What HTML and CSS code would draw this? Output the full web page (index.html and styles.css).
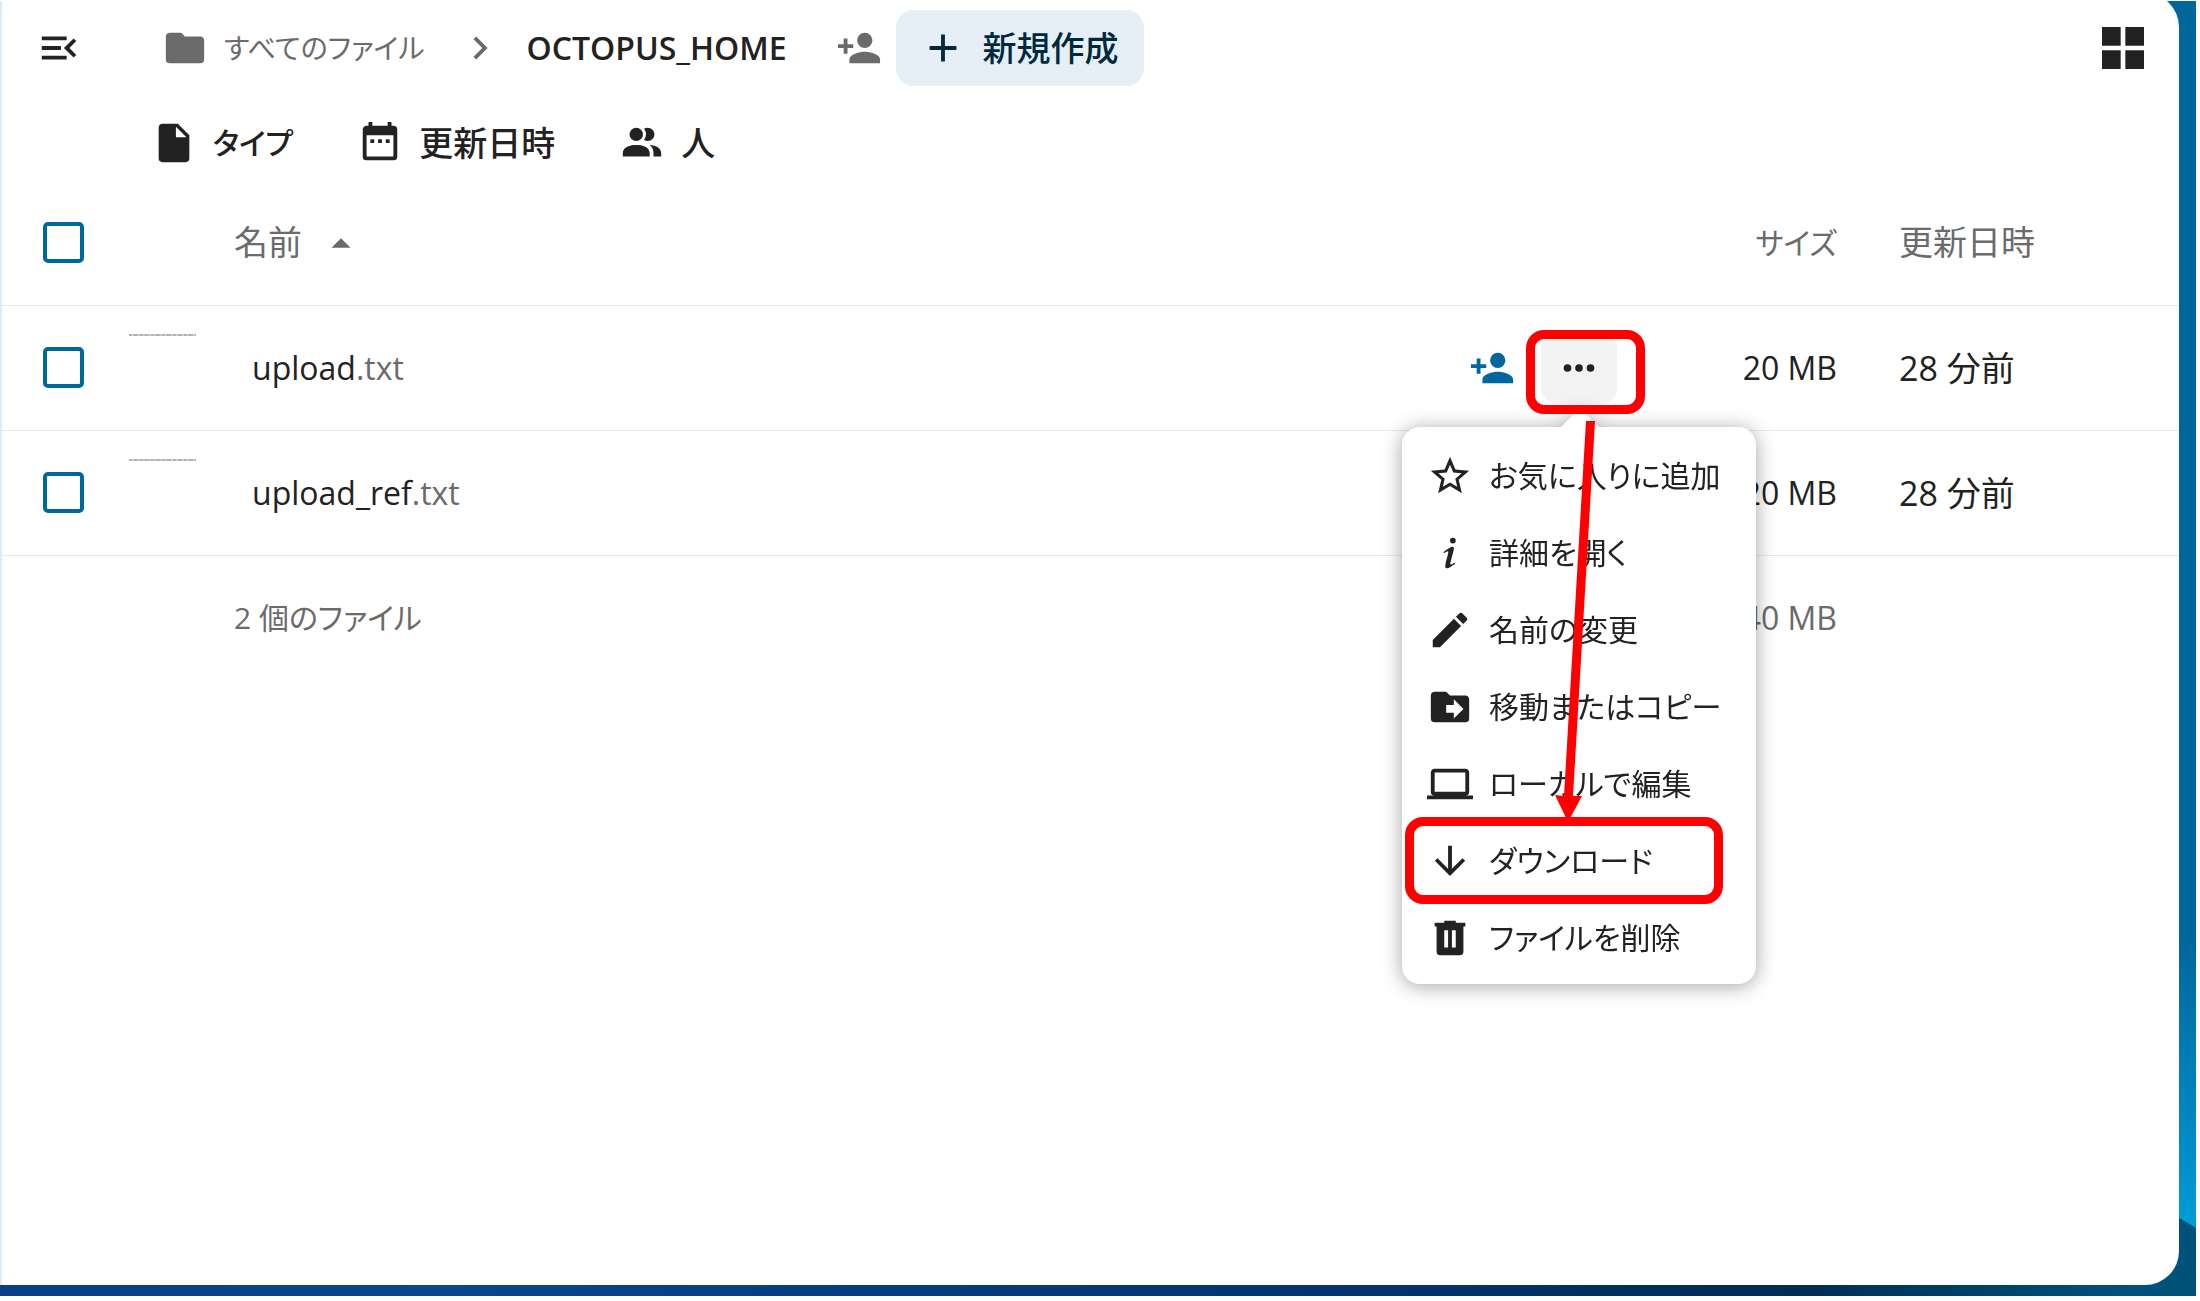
FILE: index.html
```html
<!DOCTYPE html>
<html lang="ja">
<head>
    <meta charset="UTF-8">
    <meta name="viewport" content="width=device-width, initial-scale=1.0">
    <title>OCTOPUS_HOME</title>
    <link rel="stylesheet" href="styles.css">
</head>
<body>
    <div class="frame">
      <main class="panel">
        <!-- Header -->
        <header class="topbar">
          <button class="icon-button menu-toggle" type="button" aria-label="メニュー">
            <svg class="icon" viewBox="0 0 24 24"><path d="M21,15.61L19.59,17L14.58,12L19.59,7L21,8.39L17.44,12L21,15.61M3,6H16V8H3V6M3,13V11H13V13H3M3,18V16H16V18H3Z"/></svg>
          </button>
          <nav class="breadcrumb">
            <a class="crumb" href="#">
              <svg class="icon" viewBox="0 0 24 24"><path d="M10,4H4C2.89,4 2,4.89 2,6V18A2,2 0 0,0 4,20H20A2,2 0 0,0 22,18V8C22,6.89 21.1,6 20,6H12L10,4Z"/></svg>
              <span class="crumb-title">すべてのファイル</span>
            </a>
            <svg class="icon crumb-arrow" viewBox="0 0 24 24"><path d="M8.59,16.58L13.17,12L8.59,7.41L10,6L16,12L10,18L8.59,16.58Z"/></svg>
            <a class="crumb crumb--current" href="#">OCTOPUS_HOME</a>
            <button class="icon-button crumb-share" type="button" aria-label="共有">
              <svg class="icon" viewBox="0 0 24 24"><path d="M15,14C12.33,14 7,15.33 7,18V20H23V18C23,15.33 17.67,14 15,14M6,10V7H4V10H1V12H4V15H6V12H9V10M15,12A4,4 0 0,0 19,8A4,4 0 0,0 15,4A4,4 0 0,0 11,8A4,4 0 0,0 15,12Z"/></svg>
            </button>
          </nav>
          <button class="new-button" type="button">
            <svg class="icon" viewBox="0 0 24 24"><path d="M19,13H13V19H11V13H5V11H11V5H13V11H19V13Z"/></svg>
            新規作成
          </button>
          <button class="icon-button view-toggle" type="button" aria-label="グリッド表示">
            <svg class="icon icon--large" viewBox="0 0 24 24"><path d="M3,11H11V3H3M3,21H11V13H3M13,21H21V13H13M13,11H21V3H13"/></svg>
          </button>
        </header>

        <!-- Filters -->
        <div class="filters">
          <button class="filter" type="button">
            <svg class="icon" viewBox="0 0 24 24"><path d="M13,9V3.5L18.5,9M6,2C4.89,2 4,2.89 4,4V20A2,2 0 0,0 6,22H18A2,2 0 0,0 20,20V8L14,2H6Z"/></svg>
            <span class="kana">タイプ</span>
          </button>
          <button class="filter" type="button">
            <svg class="icon" viewBox="0 0 24 24"><path d="M9,10H7V12H9V10M13,10H11V12H13V10M17,10H15V12H17V10M19,3H18V1H16V3H8V1H6V3H5C3.89,3 3,3.9 3,5V19A2,2 0 0,0 5,21H19A2,2 0 0,0 21,19V5A2,2 0 0,0 19,3M19,19H5V8H19V19Z"/></svg>
            更新日時
          </button>
          <button class="filter" type="button">
            <svg class="icon" viewBox="0 0 24 24"><path d="M16 17V19H2V17S2 13 9 13 16 17 16 17M12.5 7.5A3.5 3.5 0 1 0 9 11A3.5 3.5 0 0 0 12.5 7.5M15.94 13A5.32 5.32 0 0 1 18 17V19H22V17S22 13.37 15.94 13M15 4A3.39 3.39 0 0 0 13.07 4.59A5 5 0 0 1 13.07 10.41A3.39 3.39 0 0 0 15 11A3.5 3.5 0 0 0 15 4Z"/></svg>
            人
          </button>
        </div>

        <!-- File list -->
        <table class="files">
          <thead>
            <tr>
              <th class="col-check"><input class="check" type="checkbox" aria-label="すべて選択"></th>
              <th class="col-thumb"></th>
              <th class="col-name">
                <button class="sort" type="button">名前
                  <svg class="icon" viewBox="0 0 24 24"><path d="M7,15L12,10L17,15H7Z"/></svg>
                </button>
              </th>
              <th class="col-actions"></th>
              <th class="col-size"><span class="kana">サイズ</span></th>
              <th class="col-date">更新日時</th>
            </tr>
          </thead>
          <tbody>
            <tr>
              <td class="col-check"><input class="check" type="checkbox" aria-label="upload.txt"></td>
              <td class="col-thumb"><div class="thumb"></div></td>
              <td class="col-name"><a class="file" href="#">upload<span class="ext">.txt</span></a></td>
              <td class="col-actions">
                <div class="actions">
                  <button class="icon-button share" type="button" aria-label="共有">
                    <svg class="icon" viewBox="0 0 24 24"><path d="M15,14C12.33,14 7,15.33 7,18V20H23V18C23,15.33 17.67,14 15,14M6,10V7H4V10H1V12H4V15H6V12H9V10M15,12A4,4 0 0,0 19,8A4,4 0 0,0 15,4A4,4 0 0,0 11,8A4,4 0 0,0 15,12Z"/></svg>
                  </button>
                  <button class="icon-button more" type="button" aria-label="操作">
                    <svg class="icon" viewBox="0 0 24 24"><path d="M16,12A2,2 0 0,1 18,10A2,2 0 0,1 20,12A2,2 0 0,1 18,14A2,2 0 0,1 16,12M10,12A2,2 0 0,1 12,10A2,2 0 0,1 14,12A2,2 0 0,1 12,14A2,2 0 0,1 10,12M4,12A2,2 0 0,1 6,10A2,2 0 0,1 8,12A2,2 0 0,1 6,14A2,2 0 0,1 4,12Z"/></svg>
                  </button>

                  <!-- Popup menu -->
                  <div class="popup">
                    <ul class="menu">
                      <li><button class="menu-item" type="button">
                        <svg class="icon" viewBox="0 0 24 24"><path d="M12,15.39L8.24,17.66L9.23,13.38L5.91,10.5L10.29,10.13L12,6.09L13.71,10.13L18.09,10.5L14.77,13.38L15.76,17.66M22,9.24L14.81,8.63L12,2L9.19,8.63L2,9.24L7.45,13.97L5.82,21L12,17.27L18.18,21L16.54,13.97L22,9.24Z"/></svg>
                        お気に入りに追加
                      </button></li>
                      <li><button class="menu-item" type="button">
                        <svg class="icon" viewBox="0 0 24 24"><path d="M13.5,4A1.5,1.5 0 0,0 12,5.5A1.5,1.5 0 0,0 13.5,7A1.5,1.5 0 0,0 15,5.5A1.5,1.5 0 0,0 13.5,4M13.14,8.77C11.95,8.87 8.7,11.46 8.7,11.46C8.5,11.61 8.56,11.6 8.72,11.88C8.88,12.15 8.86,12.17 9.05,12.04C9.25,11.91 9.58,11.7 10.13,11.36C12.25,10 10.47,13.14 9.56,18.43C9.2,21.05 11.56,19.7 12.17,19.3C12.77,18.91 14.38,17.8 14.54,17.69C14.76,17.54 14.6,17.42 14.43,17.17C14.31,17 14.19,17.12 14.19,17.12C13.54,17.55 12.35,18.45 12.19,17.88C12,17.31 13.22,13.4 13.89,10.71C14,10.07 14.3,8.67 13.14,8.77Z"/></svg>
                        詳細を開く
                      </button></li>
                      <li><button class="menu-item" type="button">
                        <svg class="icon" viewBox="0 0 24 24"><path d="M20.71,7.04C21.1,6.65 21.1,6 20.71,5.63L18.37,3.29C18,2.9 17.35,2.9 16.96,3.29L15.12,5.12L18.87,8.87M3,17.25V21H6.75L17.81,9.93L14.06,6.18L3,17.25Z"/></svg>
                        名前の変更
                      </button></li>
                      <li><button class="menu-item" type="button">
                        <svg class="icon" viewBox="0 0 24 24"><path d="M14,18V15H10V11H14V8L19,13M20,6H12L10,4H4C2.89,4 2,4.89 2,6V18A2,2 0 0,0 4,20H20A2,2 0 0,0 22,18V8C22,6.89 21.1,6 20,6Z"/></svg>
                        移動またはコピー
                      </button></li>
                      <li><button class="menu-item" type="button">
                        <svg class="icon" viewBox="0 0 24 24"><path d="M4,6H20V16H4M20,18A2,2 0 0,0 22,16V6C22,4.89 21.1,4 20,4H4C2.89,4 2,4.89 2,6V16A2,2 0 0,0 4,18H0V20H24V18H20Z"/></svg>
                        ローカルで編集
                      </button></li>
                      <li><button class="menu-item" type="button">
                        <svg class="icon" viewBox="0 0 24 24"><path d="M11,4H13V16L18.5,10.5L19.92,11.92L12,19.84L4.08,11.92L5.5,10.5L11,16V4Z"/></svg>
                        ダウンロード
                      </button></li>
                      <li><button class="menu-item" type="button">
                        <svg class="icon" viewBox="0 0 24 24"><path d="M9,3V4H4V6H5V19A2,2 0 0,0 7,21H17A2,2 0 0,0 19,19V6H20V4H15V3H9M9,8H11V17H9V8M13,8H15V17H13V8Z"/></svg>
                        ファイルを削除
                      </button></li>
                    </ul>
                  </div>

                  <!-- Red guide: more button to download -->
                  <span class="mark mark--more"></span>
                  <span class="mark mark--download"></span>
                  <svg class="mark-arrow" viewBox="0 0 50 402">
                    <path d="M40,0H49L27,375H36L22,401L9,374L18,375Z"/>
                  </svg>
                </div>
              </td>
              <td class="col-size">20 MB</td>
              <td class="col-date">28 分前</td>
            </tr>
            <tr>
              <td class="col-check"><input class="check" type="checkbox" aria-label="upload_ref.txt"></td>
              <td class="col-thumb"><div class="thumb"></div></td>
              <td class="col-name"><a class="file" href="#">upload_ref<span class="ext">.txt</span></a></td>
              <td class="col-actions"></td>
              <td class="col-size">20 MB</td>
              <td class="col-date">28 分前</td>
            </tr>
          </tbody>
          <tfoot>
            <tr>
              <td class="col-check"></td>
              <td class="col-thumb"></td>
              <td class="col-name"><span class="kana">2 個のファイル</span></td>
              <td class="col-actions"></td>
              <td class="col-size">40 MB</td>
              <td class="col-date"></td>
            </tr>
          </tfoot>
        </table>
      </main>
    </div>
</body>
</html>
```
FILE: styles.css
```css
:root {
  --primary: #00679e;
  --text: #222;
  --muted: #6b6b6b;
  --line: #e9e9e9;
  --mark: #f00;
}

* {
  box-sizing: border-box;
}

body {
  margin: 0;
  padding: 1px 4px 5px 0;
  height: 100vh;
  overflow: hidden;
  background: #fff;
  color: var(--text);
  font-family: "Open Sans", "Noto Sans CJK JP", sans-serif;
  font-size: 32px;
  line-height: 48px;
  font-feature-settings: "palt";
}

button {
  padding: 0;
  border: 0;
  background: none;
  color: inherit;
  font: inherit;
  font-feature-settings: inherit;
  cursor: pointer;
}

a {
  color: inherit;
  text-decoration: none;
}

.icon {
  display: block;
  flex: none;
  width: 46px;
  height: 46px;
  fill: currentColor;
}

.icon--large {
  width: 56px;
  height: 56px;
}

.kana {
  font-size: 30px;
}

/* wallpaper strip around the panel */
.frame {
  height: 100%;
  padding: 0 17px 11px 0;
  overflow: hidden;
  background:
    linear-gradient(to top right, #00527a 50%, transparent 52%) right bottom 68px / 17px 10px no-repeat,
    linear-gradient(#00527a, #00527a) right bottom / 51px 68px no-repeat,
    linear-gradient(to right, #083f86, #0a4590 20%, #03346e 60%, #002d54 82%, #00527a 97%) left bottom / 100% 40px no-repeat,
    linear-gradient(to bottom, #00669b 72%, #0086c0 86%, #009dda 95%);
}

.panel {
  height: calc(100% + 8px);
  margin-top: -8px;
  padding-top: 8px;
  border-left: 2px solid #dcebf5;
  border-radius: 0 34px 34px 0;
  background: #fff;
}

/* header */
.topbar {
  display: flex;
  align-items: center;
  height: 93px;
  padding: 0 28px 0 34px;
}

.breadcrumb {
  display: flex;
  align-items: center;
  margin-left: 80px;
  color: var(--muted);
}

.crumb {
  display: flex;
  align-items: center;
  gap: 16px;
}

.crumb-title {
  font-size: 28px;
}

.crumb-arrow {
  margin: 0 24px 0 32px;
}

.crumb--current {
  color: var(--text);
  font-weight: 600;
}

.crumb-share {
  margin-left: 50px;
}

.new-button {
  display: flex;
  align-items: center;
  gap: 16px;
  height: 76px;
  margin-left: 14px;
  padding: 0 26px 0 24px;
  border-radius: 18px;
  background: #e5eff5;
  color: #00293f;
  font-size: 34px;
  font-weight: 500;
}

.view-toggle {
  margin-left: auto;
}

/* filters */
.filters {
  display: flex;
  gap: 64px;
  height: 86px;
  padding: 12px 0 0 149px;
}

.filter {
  display: flex;
  align-items: center;
  gap: 16px;
  font-size: 34px;
  font-weight: 500;
}

/* file list */
.files {
  width: 100%;
  border-collapse: collapse;
  table-layout: fixed;
}

.files tr {
  height: 125px;
  border-bottom: 1px solid var(--line);
}

.files tfoot tr {
  border: 0;
}

.files th,
.files td {
  padding: 0;
  text-align: left;
  font-weight: 400;
}

.files th,
.files tfoot td {
  color: var(--muted);
}

.files .col-check {
  width: 127px;
  padding-left: 41px;
}

.files .col-thumb {
  width: 105px;
  vertical-align: top;
}

.files tbody .col-name {
  padding-left: 18px;
}

.files .col-actions {
  width: 240px;
}

.files .col-size {
  width: 228px;
  text-align: right;
}

.files .col-date {
  width: 342px;
  padding-left: 62px;
  font-size: 34px;
}

.check {
  display: block;
  appearance: none;
  width: 41px;
  height: 41px;
  margin: 0;
  border: 4px solid var(--primary);
  border-radius: 5px;
  background: #fff;
}

.sort {
  display: flex;
  align-items: center;
  gap: 16px;
  font-size: 34px;
}

.thumb {
  width: 67px;
  height: 2px;
  margin-top: 28px;
  background: repeating-linear-gradient(to right, #aaa 0, #bbb 3px, #e5e5e5 4px, #aaa 5px, #bbb 9px, #ddd 11px);
}

.ext {
  color: var(--muted);
}

.actions {
  position: relative;
  display: flex;
  align-items: center;
  gap: 26px;
  height: 72px;
  margin-left: 100px;
}

.share {
  color: var(--primary);
}

.more {
  display: flex;
  flex: none;
  align-items: center;
  justify-content: center;
  width: 76px;
  height: 72px;
  border-radius: 16px;
  background: #f3f3f3;
}

/* popup menu */
.popup {
  position: absolute;
  top: 95px;
  left: -67px;
  z-index: 2;
  width: 354px;
  padding: 11px 9px 7px;
  border-radius: 18px;
  background: #fff;
  filter: drop-shadow(0 2px 10px rgba(0, 0, 0, 0.36));
}

.popup:before {
  position: absolute;
  top: -19px;
  left: 159px;
  border: 19px solid transparent;
  border-top: 0;
  border-bottom-color: #fff;
  content: "";
}

.menu {
  margin: 0;
  padding: 0;
  list-style: none;
}

.menu-item {
  display: flex;
  align-items: center;
  gap: 16px;
  width: 100%;
  height: 77px;
  padding-left: 16px;
  font-size: 30px;
  white-space: nowrap;
}

/* guide marks */
.mark {
  position: absolute;
  z-index: 3;
  border: 9px solid var(--mark);
  border-radius: 18px;
  pointer-events: none;
}

.mark--more {
  top: -2px;
  left: 57px;
  width: 119px;
  height: 84px;
}

.mark--download {
  top: 485px;
  left: -64px;
  width: 318px;
  height: 87px;
}

.mark-arrow {
  position: absolute;
  top: 89px;
  left: 77px;
  z-index: 3;
  width: 50px;
  height: 402px;
  fill: var(--mark);
  pointer-events: none;
}
```
